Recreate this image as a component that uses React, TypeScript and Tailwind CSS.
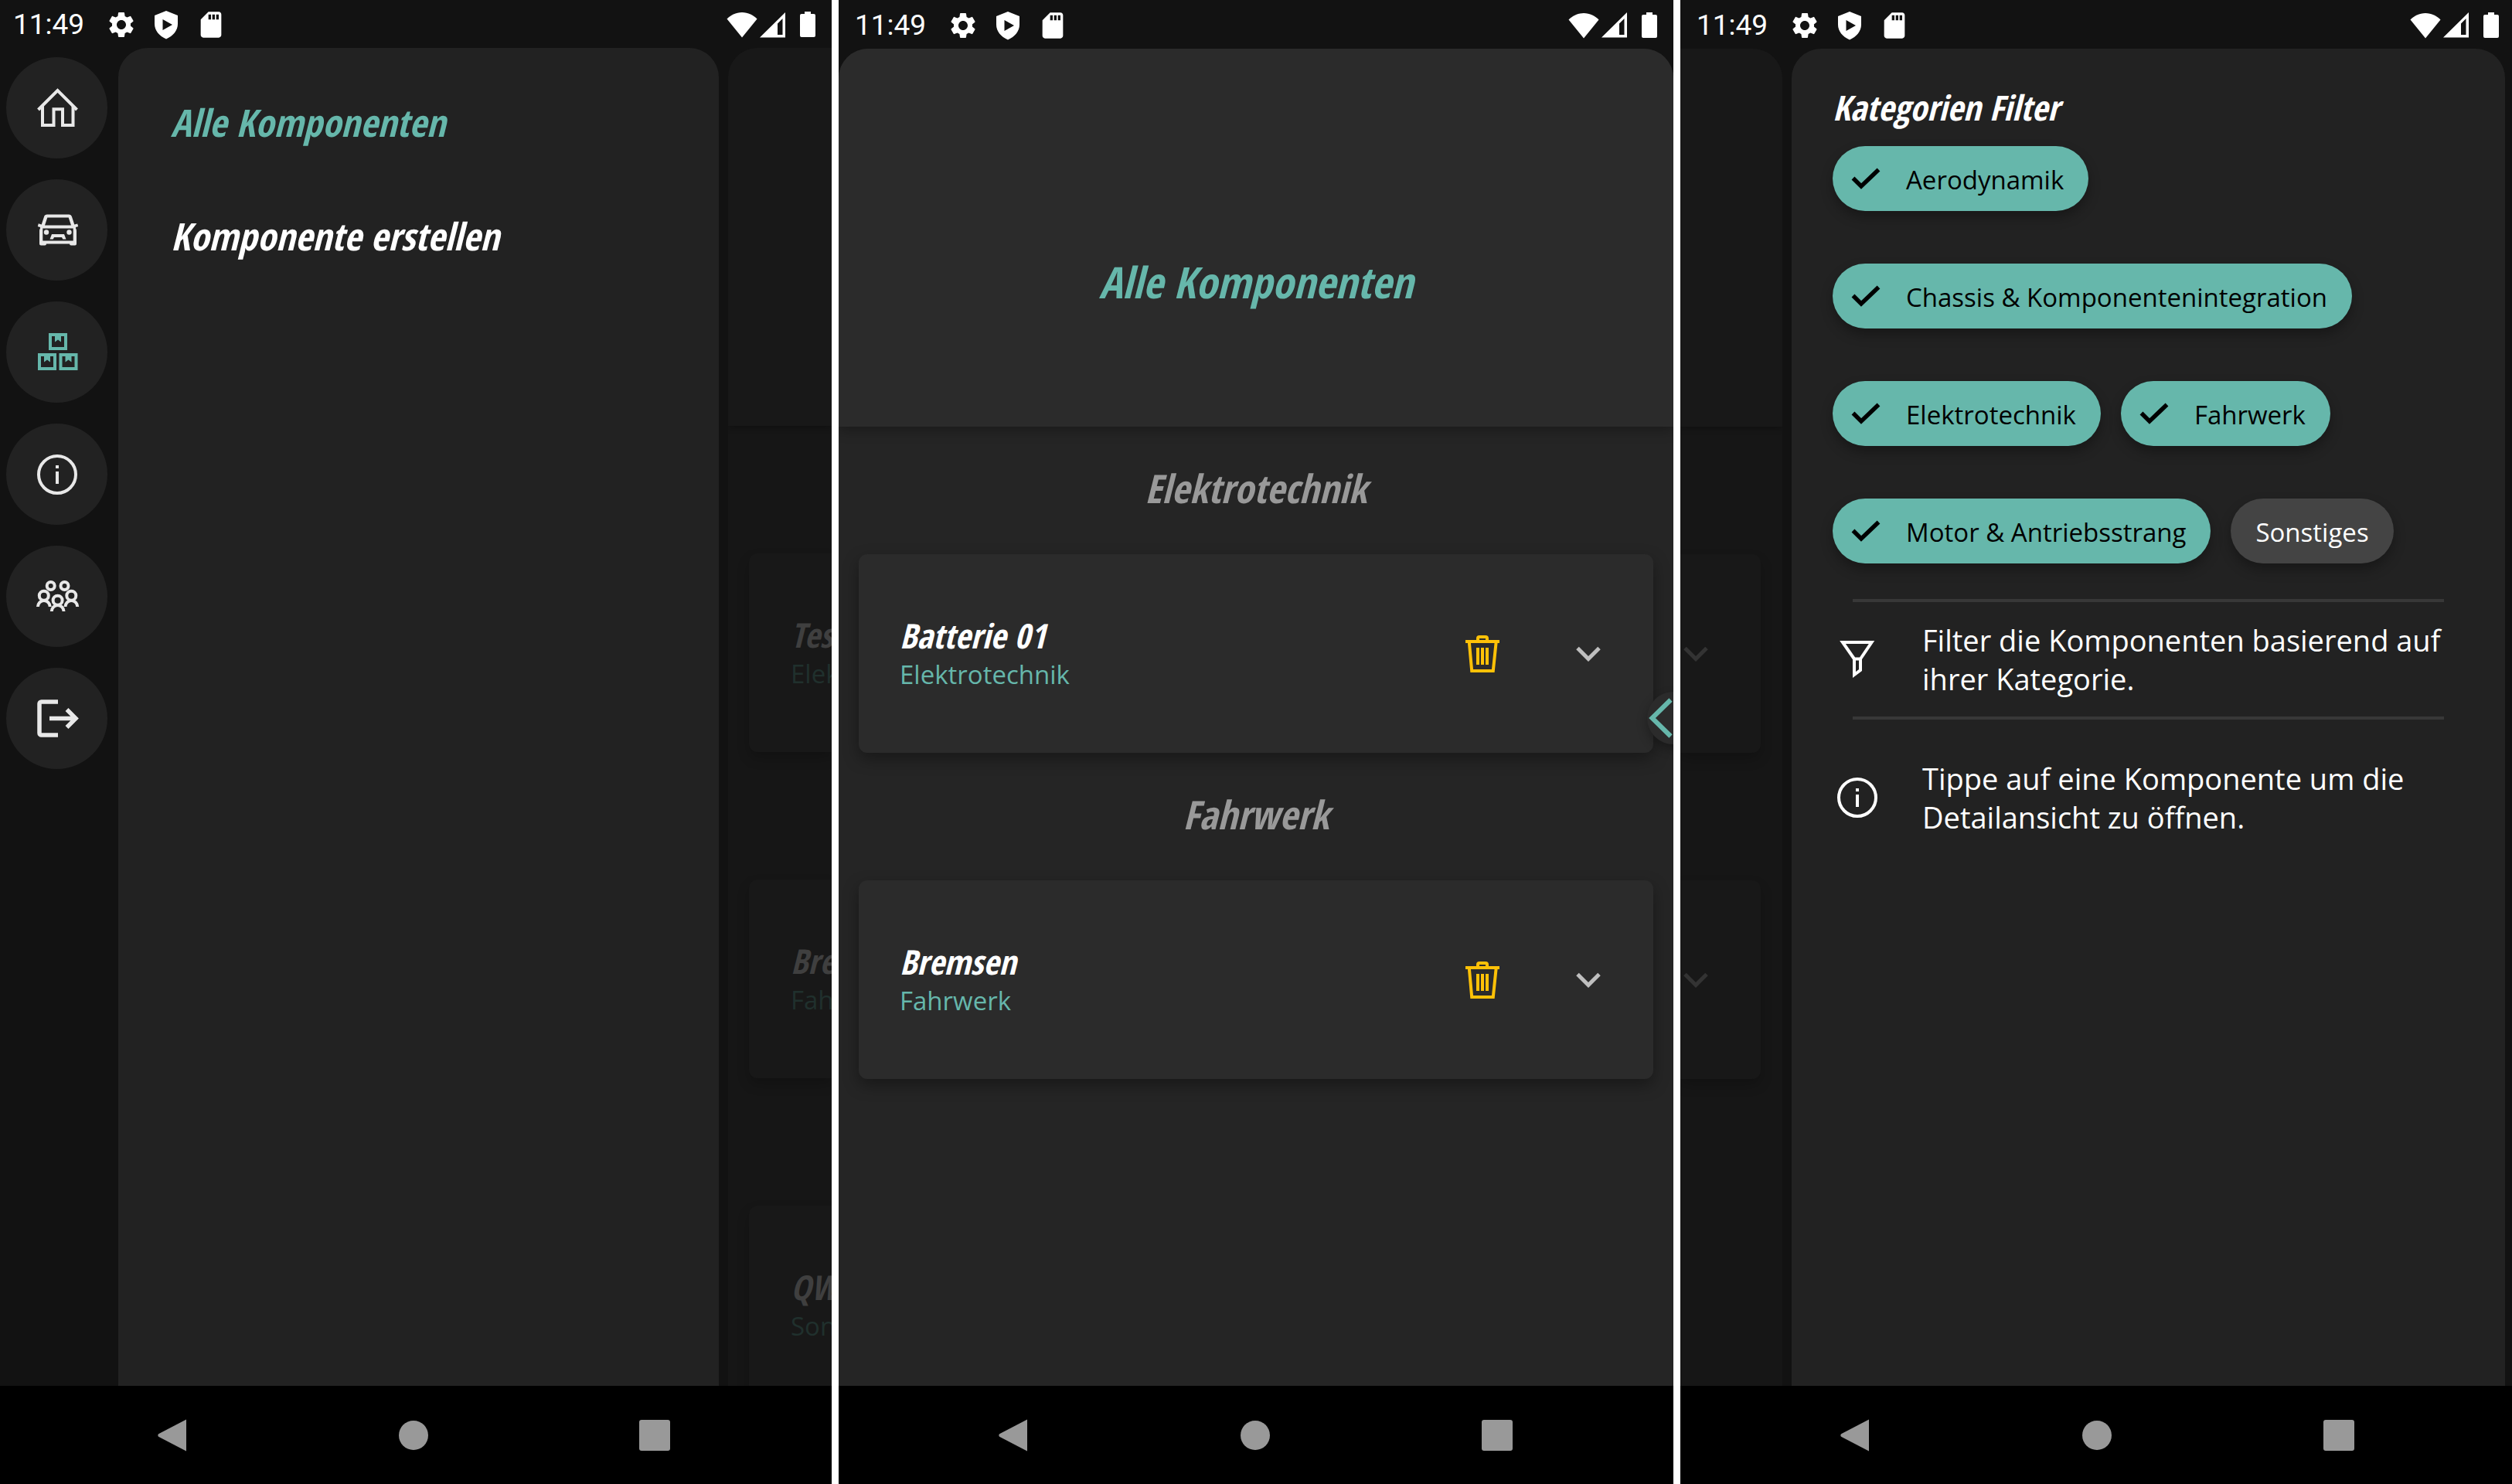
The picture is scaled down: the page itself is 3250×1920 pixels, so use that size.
import { useState } from "react";
import type { ReactNode } from "react";
import { MdSettings, MdSdCard } from "react-icons/md";

const HEADING = "font-['Open_Sans_Condensed','Roboto_Condensed','Open_Sans',sans-serif] font-bold italic";

function WifiIcon() {
  return (
    <svg viewBox="0 0 40 34" className="h-[34px] w-10 fill-current" aria-hidden="true">
      <path d="M20 33.500 0.500 9.500C5 5 12 1 20 1s15 4 19.500 8.500z" />
    </svg>
  );
}

function SignalIcon() {
  return (
    <svg viewBox="0 0 33 33" className="ml-[3px] h-[33px] w-[33px]" aria-hidden="true">
      <path fillRule="evenodd" fill="currentColor" d="M0 32.500 33 0v32.500zM23 14.500v14.500h6.500V8z" />
    </svg>
  );
}

function BatteryIcon() {
  return (
    <svg viewBox="0 0 20 34" className="ml-[19px] h-[34px] w-5 fill-current" aria-hidden="true">
      <path d="M6 0h8v3h4a2 2 0 0 1 2 2v26a2 2 0 0 1-2 2H2a2 2 0 0 1-2-2V5a2 2 0 0 1 2-2h4z" />
    </svg>
  );
}

function ShieldPlayIcon() {
  return (
    <svg viewBox="0 0 40 40" className="size-10" aria-hidden="true">
      <path
        fillRule="evenodd"
        fill="currentColor"
        d="M20 2 35 8v11c0 8.500-6 15.500-15 19.500C11 34.500 5 27.500 5 19V8zM15.500 13v14L28 20z"
      />
    </svg>
  );
}

function StatusBar({ className }: { className: string }) {
  return (
    <div className={`flex shrink-0 items-center bg-[#121212] pt-[2px] text-white ${className}`}>
      <time className="font-['Roboto',sans-serif] text-[37px] leading-[48px]">11:49</time>
      <div className="ml-[28px] flex items-center gap-[18px]">
        <MdSettings className="size-10" />
        <ShieldPlayIcon />
        <MdSdCard className="size-10" />
      </div>
      <div className="ml-auto flex items-center">
        <WifiIcon />
        <SignalIcon />
        <BatteryIcon />
      </div>
    </div>
  );
}

function SystemNav({ className }: { className: string }) {
  return (
    <nav className={`flex h-[127px] shrink-0 items-center justify-around bg-black text-[#999999] ${className}`}>
      <button type="button" aria-label="Zurück">
        <svg viewBox="0 0 40 44" className="h-11 w-10 fill-current">
          <path d="M38 1.500v41L2.500 24a2.300 2.300 0 0 1 0-4z" />
        </svg>
      </button>
      <button type="button" aria-label="Startbildschirm">
        <svg viewBox="0 0 40 40" className="size-10 fill-current">
          <circle cx="20" cy="20" r="19" />
        </svg>
      </button>
      <button type="button" aria-label="Übersicht">
        <svg viewBox="0 0 40 40" className="size-10 fill-current">
          <rect width="40" height="40" rx="3" />
        </svg>
      </button>
    </nav>
  );
}

function HomeIcon() {
  return (
    <svg viewBox="0 0 64 64" className="size-16 fill-none stroke-current stroke-4">
      <path d="M7.500 34 32.500 9l25 25" />
      <path d="M13 29v25h14.500V33.300h11.500V54h13.500V29" />
    </svg>
  );
}

function CarIcon() {
  return (
    <svg viewBox="0 0 64 64" className="size-16 fill-current">
      <path
        fillRule="evenodd"
        d="M19 11.500h28c2 0 3.500 1 4 3l3.300 10 3.900-1.100 1 3.700-3.200 1v1.500c.700 1 1 2 1 3.500V49.500a2 2 0 0 1-2 2h-5a2 2 0 0 1-2-2H18a2 2 0 0 1-2 2h-5a2 2 0 0 1-2-2V33c0-1.500.300-2.500 1-3.500V28l-3.200-1 1-3.700 3.900 1.100 3.300-10c.500-2 2-2.900 4-2.900zM19.300 15.500 16 25.500h34L46.700 15.500zM13.300 29.500V45.500h39.400V29.500z"
      />
      <circle cx="18" cy="34.500" r="3.200" />
      <circle cx="47.500" cy="34.500" r="3.200" />
      <path d="M25 37h16l2.500 6.500h-4.200L38 41H28l-1.300 2.500h-4.200z" />
    </svg>
  );
}

function BoxesIcon() {
  const box = "M0 0h24v22H0zM4 4v14h16V4h-4v7.500l-4-3-4 3V4z";
  return (
    <svg viewBox="0 0 64 64" className="size-16 fill-current" fillRule="evenodd">
      <path transform="translate(21 7)" d={box} />
      <path transform="translate(7 33)" d={box} />
      <path transform="translate(34.500 33)" d={box} />
    </svg>
  );
}

function InfoIcon({ className }: { className: string }) {
  return (
    <svg viewBox="0 0 52 52" className={className} aria-hidden="true">
      <circle cx="26" cy="26" r="24" fill="none" stroke="currentColor" strokeWidth="4" />
      <path fill="currentColor" d="M24 14h4v4h-4zM24 22h4v16h-4z" />
    </svg>
  );
}

function PeopleIcon() {
  return (
    <svg viewBox="0 0 64 64" className="size-16 fill-none stroke-current stroke-4">
      <circle cx="23.700" cy="18" r="5" />
      <circle cx="41.500" cy="18" r="5" />
      <circle cx="14.800" cy="30.700" r="6" />
      <circle cx="50.300" cy="30.700" r="6" />
      <circle cx="32.600" cy="36.700" r="6" />
      <path d="M7 45a7.800 8 0 0 1 15.700 0M42.500 45a7.800 8 0 0 1 15.700 0M24.800 51a7.800 8 0 0 1 15.700 0" />
    </svg>
  );
}

function LogoutIcon() {
  return (
    <svg viewBox="0 0 64 64" className="size-16 fill-none stroke-current" strokeWidth="5.500">
      <path d="M33 10H11.500a2.500 2.500 0 0 0-2.500 2.500v38a2.500 2.500 0 0 0 2.500 2.500H33" />
      <path d="M22 31.500h34M44.500 20l11.500 11.500L44.500 43" />
    </svg>
  );
}

function TrashIcon() {
  return (
    <svg viewBox="0 0 48 48" className="size-12 fill-none stroke-current stroke-4">
      <path d="M2 8h44M18 8V4a2 2 0 0 1 2-2h8a2 2 0 0 1 2 2v4" />
      <path d="M6.800 8.500 10.200 46h27.600L41.700 8.500M18 16v22M24 16v22M30 16v22" />
    </svg>
  );
}

function ChevronDownIcon() {
  return (
    <svg viewBox="0 0 32 20" className="h-5 w-8 fill-none stroke-current" strokeWidth="5">
      <path d="M2 2.500 16 16.500l14-14" />
    </svg>
  );
}

function FilterIcon() {
  return (
    <svg viewBox="0 0 52 52" className="size-[52px] shrink-0 fill-none stroke-current stroke-4" aria-hidden="true">
      <path d="M7 4h37.500L30 25.500V40l-8 6V25.500zM21 25.500h10" />
    </svg>
  );
}

const railItems: { label: string; icon: ReactNode; active?: boolean }[] = [
  { label: "Startseite", icon: <HomeIcon /> },
  { label: "Fahrzeuge", icon: <CarIcon /> },
  { label: "Komponenten", icon: <BoxesIcon />, active: true },
  { label: "Info", icon: <InfoIcon className="size-[52px]" /> },
  { label: "Team", icon: <PeopleIcon /> },
  { label: "Abmelden", icon: <LogoutIcon /> },
];

const peekCards = [
  { name: "Tes", category: "Elek" },
  { name: "Bre", category: "Fah" },
  { name: "QW", category: "Son" },
];

function CardText({ name, category, dim }: { name: string; category: string; dim?: boolean }) {
  return (
    <div className="whitespace-nowrap pt-[2px]">
      <h3 className={`${HEADING} text-[44px] leading-[52px] ${dim ? "text-[#3f3f3f]" : "text-white"}`}>{name}</h3>
      <p className={`font-['Open_Sans',sans-serif] text-[33px] leading-[50px] ${dim ? "text-[#20302d]" : "text-[#66b7ab]"}`}>
        {category}
      </p>
    </div>
  );
}

function MenuScreen() {
  return (
    <section className="flex min-w-0 flex-col overflow-hidden bg-[#121212]">
      <StatusBar className="h-[62px] pl-[17px] pr-[21px]" />
      <div className="flex min-h-0 flex-1">
        <nav className="flex w-[153px] shrink-0 flex-col gap-[27px] pl-2 pt-3">
          {railItems.map((item) => (
            <button
              key={item.label}
              type="button"
              aria-label={item.label}
              className={`flex size-[131px] items-center justify-center rounded-full bg-[#222222] ${
                item.active ? "text-[#66b7ab]" : "text-[#e8e8e8]"
              }`}
            >
              {item.icon}
            </button>
          ))}
        </nav>
        <div className="flex min-w-0 flex-1 flex-col items-start gap-[87px] rounded-t-[38px] bg-[#222222] pl-[68px] pt-[66px]">
          <a href="#alle" className={`${HEADING} text-[49px] leading-[60px] text-[#66b7ab]`}>
            Alle Komponenten
          </a>
          <a href="#erstellen" className={`${HEADING} text-[49px] leading-[60px] text-white`}>
            Komponente erstellen
          </a>
        </div>
        <div className="ml-3 flex w-[134px] shrink-0 flex-col overflow-hidden rounded-tl-[38px] bg-[#161616]">
          <div className="h-[489px] shrink-0 bg-[#181818] shadow-[0_2px_8px_rgba(0,0,0,0.3)]" />
          <div className="flex flex-col gap-[165px] pl-[27px] pt-[165px]">
            {peekCards.map((card) => (
              <div
                key={card.name}
                className="flex h-[257px] shrink-0 items-center rounded-l-[11px] bg-[#181818] pl-[54px] shadow-[0_8px_16px_rgba(0,0,0,0.2)]"
              >
                <CardText name={card.name} category={card.category} dim />
              </div>
            ))}
          </div>
        </div>
      </div>
      <SystemNav className="pl-[67px] pr-[73px]" />
    </section>
  );
}

function CategoryGroup({ category, name }: { category: string; name: string }) {
  return (
    <section>
      <h2 className={`${HEADING} flex h-[165px] items-center justify-center pb-[8px] text-[51px] leading-[60px] text-[#999999]`}>
        {category}
      </h2>
      <article className="mx-[26px] flex h-[257px] items-center rounded-[11px] bg-[#2b2b2b] pl-[53px] pr-[68px] shadow-[0_8px_20px_rgba(0,0,0,0.35)]">
        <CardText name={name} category={category} />
        <button type="button" aria-label={`${name} löschen`} className="ml-auto text-[#ffc107]">
          <TrashIcon />
        </button>
        <button type="button" aria-label={`${name} aufklappen`} className="ml-[97px] text-[#bfbfbf]">
          <ChevronDownIcon />
        </button>
      </article>
    </section>
  );
}

function ListScreen() {
  return (
    <section className="relative flex min-w-0 flex-col overflow-hidden bg-[#121212]">
      <StatusBar className="h-[63px] pl-[21px] pr-[21px]" />
      <main className="min-h-0 flex-1 overflow-hidden rounded-t-[38px] bg-[#252525]">
        <header className="flex h-[489px] items-end justify-center bg-[#2b2b2b] pb-[154px] shadow-[0_4px_16px_rgba(0,0,0,0.3)]">
          <h1 className={`${HEADING} text-[56px] leading-[68px] text-[#66b7ab]`}>Alle Komponenten</h1>
        </header>
        <CategoryGroup category="Elektrotechnik" name="Batterie 01" />
        <CategoryGroup category="Fahrwerk" name="Bremsen" />
      </main>
      <button
        type="button"
        aria-label="Filter öffnen"
        className="absolute -right-[34px] top-[895px] flex size-[68px] items-center rounded-full bg-[#2b2b2b] text-[#66b7ab] shadow-[0_6px_14px_rgba(0,0,0,0.3)]"
      >
        <svg viewBox="0 0 32 52" className="ml-[2px] h-[52px] w-8 fill-none stroke-current stroke-6">
          <path d="M28.500 2.500 4.500 26l24 23.500" />
        </svg>
      </button>
      <SystemNav className="pl-[70px] pr-[72px]" />
    </section>
  );
}

const initialFilters = [
  { name: "Aerodynamik", on: true },
  { name: "Chassis & Komponentenintegration", on: true },
  { name: "Elektrotechnik", on: true },
  { name: "Fahrwerk", on: true },
  { name: "Motor & Antriebsstrang", on: true },
  { name: "Sonstiges", on: false },
];

function FilterChip({ name, on, onToggle }: { name: string; on: boolean; onToggle: () => void }) {
  return (
    <label
      className={`relative flex h-[84px] cursor-pointer items-center whitespace-nowrap rounded-full font-['Open_Sans',sans-serif] text-[33px] leading-[42px] shadow-[0_8px_16px_rgba(0,0,0,0.3)] ${
        on ? "bg-[#66b7ab] pl-6 pr-8 text-black" : "bg-[#444444] px-8 text-white"
      }`}
    >
      <input type="checkbox" className="sr-only" checked={on} onChange={onToggle} />
      {on && (
        <svg viewBox="0 0 38 28" className="mr-[33px] h-7 w-[38px] fill-none stroke-current" strokeWidth="5.500" aria-hidden="true">
          <path d="M2.500 13.500 13 24 35.500 2.500" />
        </svg>
      )}
      <span className="pt-1">{name}</span>
    </label>
  );
}

function FilterScreen() {
  const [filters, setFilters] = useState(initialFilters);
  const toggle = (name: string) =>
    setFilters((current) => current.map((f) => (f.name === name ? { ...f, on: !f.on } : f)));

  return (
    <section className="flex min-w-0 flex-col overflow-hidden bg-[#121212]">
      <StatusBar className="h-[63px] pl-[21px] pr-[17px]" />
      <div className="flex min-h-0 flex-1 pr-[9px]">
        <div className="mr-3 flex w-[132px] shrink-0 flex-col overflow-hidden rounded-tr-[38px] bg-[#161616]">
          <div className="h-[489px] shrink-0 bg-[#181818] shadow-[0_2px_8px_rgba(0,0,0,0.3)]" />
          <div className="flex flex-col gap-[165px] pr-[28px] pt-[165px]">
            {["Batterie 01", "Bremsen"].map((name) => (
              <div
                key={name}
                className="flex h-[257px] items-center justify-end rounded-r-[11px] bg-[#181818] pr-[68px] text-[#333333] shadow-[0_8px_16px_rgba(0,0,0,0.2)]"
              >
                <button type="button" aria-label={`${name} aufklappen`}>
                  <ChevronDownIcon />
                </button>
              </div>
            ))}
          </div>
        </div>
        <aside className="min-w-0 flex-1 rounded-t-[38px] bg-[#222222] px-[53px] pt-12 text-white">
          <h2 className={`${HEADING} text-[45px] leading-[56px]`}>Kategorien Filter</h2>
          <div className="mt-[22px] flex flex-wrap gap-x-[26px] gap-y-[68px]">
            {filters.map((f) => (
              <FilterChip key={f.name} name={f.name} on={f.on} onToggle={() => toggle(f.name)} />
            ))}
          </div>
          <hr className="mx-[26px] mt-[46px] border-t-4 border-[#383838]" />
          <div className="flex items-center gap-[58px] py-6 pl-[6px]">
            <FilterIcon />
            <p className="font-['Open_Sans',sans-serif] text-[38px] leading-[50px]">
              Filter die Komponenten basierend auf ihrer Kategorie.
            </p>
          </div>
          <hr className="mx-[26px] border-t-4 border-[#383838]" />
          <div className="flex items-center gap-[58px] pl-[6px] pt-[51px]">
            <InfoIcon className="size-[52px] shrink-0" />
            <p className="font-['Open_Sans',sans-serif] text-[38px] leading-[50px]">
              Tippe auf eine Komponente um die Detailansicht zu öffnen.
            </p>
          </div>
        </aside>
      </div>
      <SystemNav className="pl-[70px] pr-[68px]" />
    </section>
  );
}

export default function App() {
  return (
    <div className="grid h-screen grid-cols-[1076fr_1080fr_1076fr] grid-rows-1 gap-[9px] bg-white">
      <MenuScreen />
      <ListScreen />
      <FilterScreen />
    </div>
  );
}
